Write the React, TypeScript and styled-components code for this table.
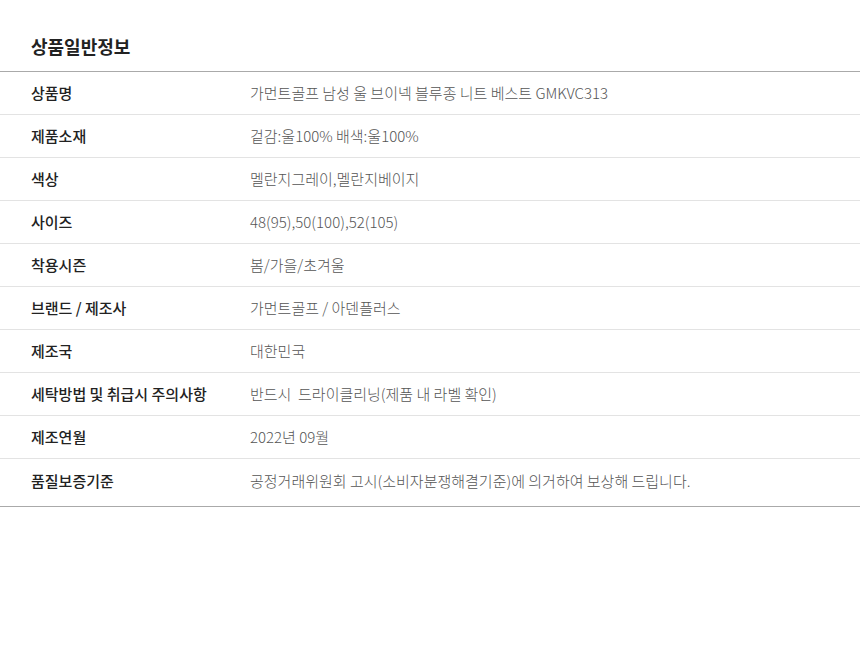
import React, { FC } from 'react';
import styled, { createGlobalStyle } from 'styled-components';

const GlobalStyle = createGlobalStyle`
  body {
    margin: 0;
    background: #fff;
    font-family: 'Noto Sans CJK KR', 'Noto Sans', sans-serif;
  }
`;

interface InfoRow {
  label: string;
  value: string;
}

const rows: InfoRow[] = [
  { label: '상품명', value: '가먼트골프 남성 울 브이넥 블루종 니트 베스트 GMKVC313' },
  { label: '제품소재', value: '겉감:울100% 배색:울100%' },
  { label: '색상', value: '멜란지그레이,멜란지베이지' },
  { label: '사이즈', value: '48(95),50(100),52(105)' },
  { label: '착용시즌', value: '봄/가을/초겨울' },
  { label: '브랜드 / 제조사', value: '가먼트골프 / 아덴플러스' },
  { label: '제조국', value: '대한민국' },
  { label: '세탁방법 및 취급시 주의사항', value: '반드시  드라이클리닝(제품 내 라벨 확인)' },
  { label: '제조연월', value: '2022년 09월' },
  { label: '품질보증기준', value: '공정거래위원회 고시(소비자분쟁해결기준)에 의거하여 보상해 드립니다.' },
];

const SectionStyled = styled.section`
  padding-top: 33px;
`;

const TitleStyled = styled.h2`
  margin: 0;
  padding: 0 31px 11px;
  font-size: 18px;
  line-height: 27px;
  font-weight: 700;
  color: #222;
  border-bottom: 1px solid #aaa;
`;

const TableStyled = styled.div`
  border-bottom: 1px solid #aaa;
`;

const RowStyled = styled.div<{ $last?: boolean }>`
  display: grid;
  grid-template-columns: 219px 1fr;
  align-items: center;
  box-sizing: border-box;
  height: ${(p) => (p.$last ? '47px' : '43px')};
  padding: ${(p) => (p.$last ? '0 0 5px 31px' : '0 0 2px 31px')};
  border-bottom: ${(p) => (p.$last ? 'none' : '1px solid #e3e3e3')};
  font-size: 15px;
`;

const LabelStyled = styled.div`
  font-weight: 500;
  color: #222;
`;

const ValueStyled = styled.div`
  font-weight: 300;
  color: #555;
  white-space: pre;
`;

const App: FC = () => (
  <>
    <GlobalStyle />
    <SectionStyled>
      <TitleStyled>상품일반정보</TitleStyled>
      <TableStyled>
        {rows.map((row, i) => (
          <RowStyled key={row.label} $last={i === rows.length - 1}>
            <LabelStyled>{row.label}</LabelStyled>
            <ValueStyled>{row.value}</ValueStyled>
          </RowStyled>
        ))}
      </TableStyled>
    </SectionStyled>
  </>
);

export default App;
